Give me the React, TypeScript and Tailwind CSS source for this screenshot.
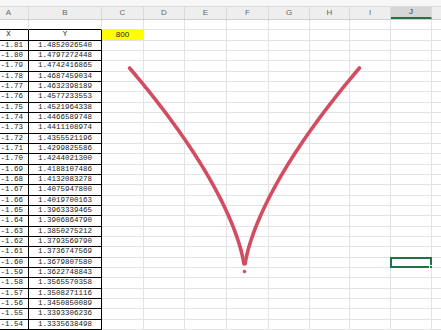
import React from 'react';

const cols = [
  { key: 'A', w: 'w-[40px]' },
  { key: 'B', w: 'w-[73px]' },
  { key: 'C', w: 'w-[42px]' },
  { key: 'D', w: 'w-[41px]' },
  { key: 'E', w: 'w-[42px]' },
  { key: 'F', w: 'w-[42px]' },
  { key: 'G', w: 'w-[41px]' },
  { key: 'H', w: 'w-[40px]' },
  { key: 'I', w: 'w-[41px]' },
  { key: 'J', w: 'w-[41px]' },
  { key: 'K', w: 'w-[40px]' },
];

const data: [string, string][] = [
  ['-1.81', '1.4852026540'],
  ['-1.80', '1.4797272448'],
  ['-1.79', '1.4742416865'],
  ['-1.78', '1.4687459034'],
  ['-1.77', '1.4632398189'],
  ['-1.76', '1.4577233553'],
  ['-1.75', '1.4521964338'],
  ['-1.74', '1.4466589748'],
  ['-1.73', '1.4411108974'],
  ['-1.72', '1.4355521196'],
  ['-1.71', '1.4299825586'],
  ['-1.70', '1.4244021300'],
  ['-1.69', '1.4188107486'],
  ['-1.68', '1.4132083278'],
  ['-1.67', '1.4075947800'],
  ['-1.66', '1.4019700163'],
  ['-1.65', '1.3963339465'],
  ['-1.64', '1.3906864790'],
  ['-1.63', '1.3850275212'],
  ['-1.62', '1.3793569790'],
  ['-1.61', '1.3736747569'],
  ['-1.60', '1.3679807580'],
  ['-1.59', '1.3622748843'],
  ['-1.58', '1.3565570358'],
  ['-1.57', '1.3508271116'],
  ['-1.56', '1.3450850089'],
  ['-1.55', '1.3393306236'],
  ['-1.54', '1.3335638498'],
];

// y = |x|^(2/3) sampled every 0.01, mapped to page pixels
const px = (x: number) => 244.5 + 63.5 * x;
const py = (y: number) => 270 - 136 * y;
const branch = (from: number, to: number) => {
  const pts: string[] = [];
  for (let i = from; i <= to; i++) {
    const x = i / 100;
    pts.push(`${px(x).toFixed(2)},${py(Math.pow(Math.abs(x), 2 / 3)).toFixed(2)}`);
  }
  return 'M' + pts.join(' L');
};

const Cell: React.FC<{ w: string; table?: boolean; children?: React.ReactNode; className?: string }> = ({ w, table, children, className }) => (
  <div
    className={`${w} shrink-0 h-full border-b border-r ${table ? 'border-black' : 'border-[#e3e3e3]'} flex items-center ${className ?? ''}`}
  >
    {children}
  </div>
);

export default function App() {
  return (
    <div className="relative w-[441px] h-[330px] overflow-hidden bg-white text-[#222]" style={{ fontFamily: '"Liberation Sans", Arial, sans-serif' }}>
      <div className="h-[7px] bg-[#f7f7f7] border-b border-[#dcdcdc]" />
      <div className="ml-[-11px]">
        {/* column headers */}
        <div className="flex h-[13px] bg-[#eeeeee] border-b border-[#cfcfcf]">
          {cols.map(c => (
            <div
              key={c.key}
              className={`${c.w} shrink-0 h-full border-r border-[#dadada] flex items-center justify-center text-[8px] ${
                c.key === 'J' ? 'bg-[#d6d6d6] border-b-2 border-b-[#217346] text-[#333]' : 'text-[#666]'
              }`}
            >
              {c.key === 'K' ? '' : c.key}
            </div>
          ))}
        </div>

        {/* row 1 */}
        <div className="flex h-[10.35px]">
          {cols.map((c, i) => (
            <Cell key={c.key} w={c.w} className={i < 2 ? 'border-b-black' : ''} />
          ))}
        </div>

        {/* row 2 : table headings */}
        <div className="flex h-[10.35px] text-[7.5px]" style={{ fontFamily: '"Liberation Mono", monospace' }}>
          <Cell w="w-[40px]" table className="justify-center">X</Cell>
          <Cell w="w-[73px]" table className="justify-center">Y</Cell>
          <Cell w="w-[42px]" className="justify-center bg-[#ffff00] text-[8px]">
            <span style={{ fontFamily: '"Liberation Sans", Arial, sans-serif' }}>800</span>
          </Cell>
          {cols.slice(3).map(c => (
            <Cell key={c.key} w={c.w} />
          ))}
        </div>

        {/* data rows */}
        {data.map(([x, y], r) => (
          <div key={x} className="flex h-[10.33px] text-[7.5px]" style={{ fontFamily: '"Liberation Mono", monospace' }}>
            <Cell w="w-[40px]" table className="justify-end pr-[5px]">{x}</Cell>
            <Cell w="w-[73px]" table className="justify-center">{y}</Cell>
            {cols.slice(2).map(c => (
              <Cell key={c.key} w={c.w} className="relative">
                {c.key === 'J' && r === 21 && (
                  <div className="absolute inset-[-1px] border-2 border-[#217346]">
                    <div className="absolute right-[-3px] bottom-[-3px] w-[4px] h-[4px] bg-[#217346] border border-white" />
                  </div>
                )}
              </Cell>
            ))}
          </div>
        ))}
      </div>

      {/* chart drawn over the sheet */}
      <svg className="absolute left-0 top-0 pointer-events-none" width={441} height={330} viewBox="0 0 441 330">
        <path d={branch(-181, -1)} fill="none" stroke="#d24c62" strokeWidth={3.6} strokeLinecap="round" strokeLinejoin="round" />
        <path d={branch(1, 181)} fill="none" stroke="#d24c62" strokeWidth={3.6} strokeLinecap="round" strokeLinejoin="round" />
        <circle cx={244.5} cy={271.5} r={1.8} fill="#d24c62" />
      </svg>
    </div>
  );
}
